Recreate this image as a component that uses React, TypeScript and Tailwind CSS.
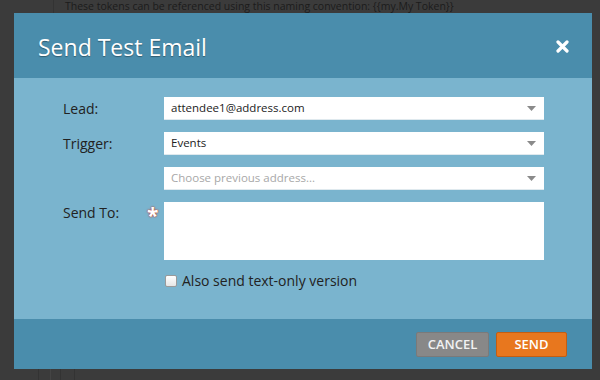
const Arrow = () => (
  <svg width="9" height="5" viewBox="0 0 9 5" className="shrink-0">
    <path d="M0 0 L9 0 L4.5 5 Z" fill="#8a8a8a" />
  </svg>
)

const Select = ({ value, placeholder }: { value?: string; placeholder?: string }) => (
  <div className="h-[23px] w-[380px] bg-white flex items-center justify-between pl-[7px] pr-[8px] border-b border-[#dfe9ee]">
    {value ? (
      <span className="text-[11.5px] text-[#222]">{value}</span>
    ) : (
      <span className="text-[11.5px] text-[#a8a8a8]">{placeholder}</span>
    )}
    <Arrow />
  </div>
)

const App = () => {
  return (
    <div className="w-[600px] h-[380px] bg-[#3b3b3b] relative overflow-hidden" style={{ fontFamily: '"Open Sans", "Noto Sans", sans-serif' }}>
      {/* page behind the overlay */}
      <div className="absolute left-[53px] top-0 w-px h-[13px] bg-[#333]" />
      <div className="absolute left-[65px] top-0 text-[10.5px] leading-[12px] text-[#1c1c1c] whitespace-nowrap">
        These tokens can be referenced using this naming convention: {"{{my.My Token}}"}
      </div>
      <div className="absolute left-[38px] bottom-0 w-px h-[11px] bg-[#333]" />
      <div className="absolute left-[50px] bottom-0 w-px h-[11px] bg-[#444]" />
      <div className="absolute left-[60px] bottom-0 w-px h-[11px] bg-[#333]" />
      <div className="absolute left-[74px] bottom-0 w-px h-[11px] bg-[#333]" />

      <div className="pt-[13px] pl-[14px]">
        <div className="w-[578px] h-[356px] flex flex-col">
          {/* header */}
          <div className="h-[65px] bg-[#4a8dac] flex items-center justify-between pl-[24px] pr-[23px]">
            <h1 className="text-[23px] text-white leading-none pt-[4px]" style={{ textShadow: '0 1px 1px rgba(0,0,0,0.35)' }}>
              Send Test Email
            </h1>
            <svg width="13" height="13" viewBox="0 0 13 13" className="mt-[2px]">
              <path d="M2 2 L11 11 M11 2 L2 11" stroke="white" strokeWidth="3.2" strokeLinecap="round" />
            </svg>
          </div>

          {/* body */}
          <div className="flex-1 bg-[#7ab4ce] pt-[19px] pl-[49px]">
            <div className="flex flex-col gap-[12px]">
              <div className="flex items-center">
                <label className="w-[101px] text-[14px] text-[#222]">Lead:</label>
                <Select value="attendee1@address.com" />
              </div>
              <div className="flex items-center">
                <label className="w-[101px] text-[14px] text-[#222]">Trigger:</label>
                <Select value="Events" />
              </div>
              <div className="flex items-center">
                <div className="w-[101px]" />
                <Select placeholder="Choose previous address..." />
              </div>
              <div className="flex items-start">
                <label className="w-[84px] text-[14px] text-[#222]">Send To:</label>
                <span className="w-[17px] text-[21px] leading-none text-white font-bold pt-[3px]" style={{ textShadow: '0 0 2px #c0392b, 0 0 1px #c0392b' }}>*</span>
                <div className="w-[380px] h-[58px] bg-white" />
              </div>
            </div>
            <div className="flex items-center mt-[10px] ml-[102px] gap-[5px]">
              <div className="w-[12px] h-[12px] bg-gradient-to-b from-white to-[#e6e6e6] border border-[#9a9a9a] rounded-[2px]" />
              <span className="text-[14px] text-[#222]">Also send text-only version</span>
            </div>
          </div>

          {/* footer */}
          <div className="h-[50px] bg-[#4a8dac] flex items-center justify-end gap-[7px] pr-[25px] pt-[1px]">
            <button className="w-[73px] h-[25px] bg-[#888] border border-[#7a7a7a] rounded-[2px] text-[13px] font-semibold text-[#f2f2f2]">
              CANCEL
            </button>
            <button className="w-[71px] h-[25px] bg-[#e8771e] border border-[#c45e12] rounded-[2px] text-[13px] font-semibold text-white">
              SEND
            </button>
          </div>
        </div>
      </div>
    </div>
  )
}

export default App
